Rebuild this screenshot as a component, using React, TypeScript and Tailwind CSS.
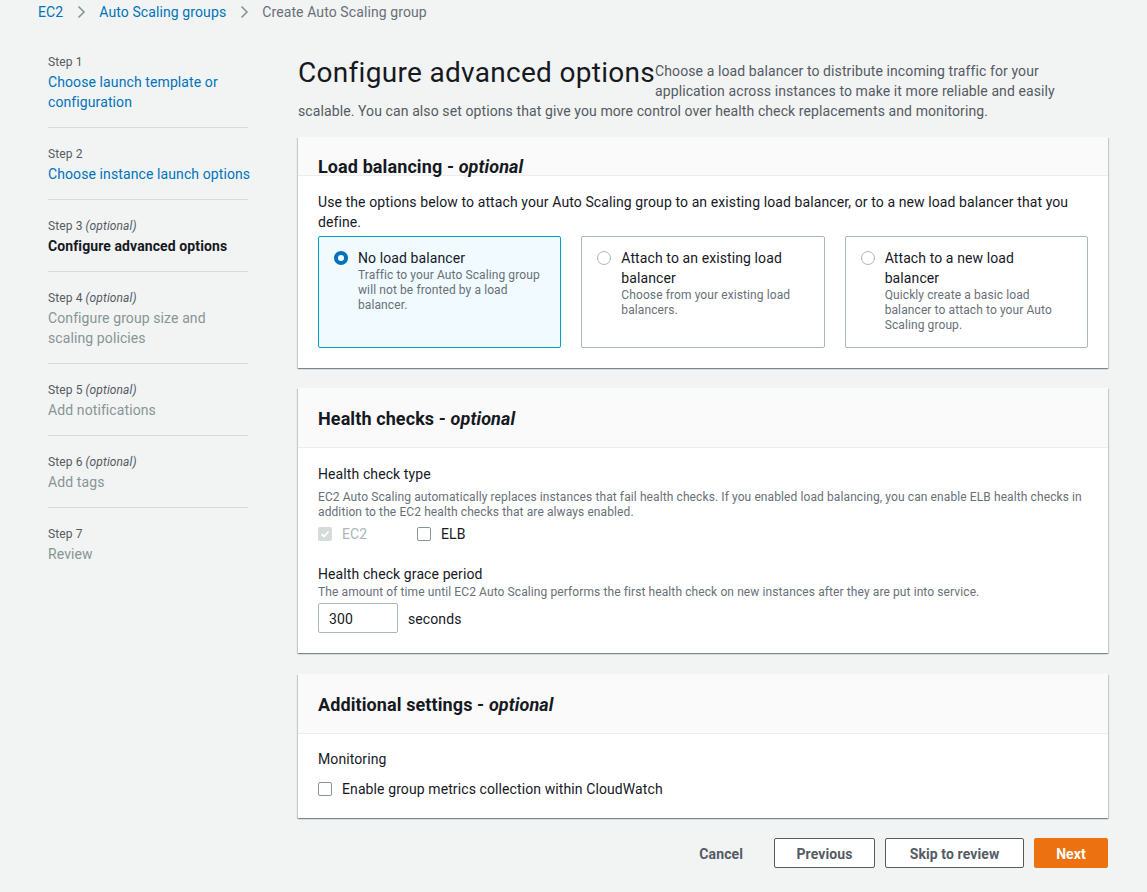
const steps = [
  { n: "Step 1", opt: false, title: "Choose launch template or configuration", state: "link" },
  { n: "Step 2", opt: false, title: "Choose instance launch options", state: "link" },
  { n: "Step 3", opt: true, title: "Configure advanced options", state: "active" },
  { n: "Step 4", opt: true, title: "Configure group size and scaling policies", state: "off" },
  { n: "Step 5", opt: true, title: "Add notifications", state: "off" },
  { n: "Step 6", opt: true, title: "Add tags", state: "off" },
  { n: "Step 7", opt: false, title: "Review", state: "off" },
];

function Chevron() {
  return (
    <svg width="16" height="16" viewBox="0 0 16 16" className="mx-[10px]">
      <path d="M5.5 2.5 L11 8 L5.5 13.5" fill="none" stroke="#879596" strokeWidth="1.6" />
    </svg>
  );
}

function Radio({ checked }: { checked?: boolean }) {
  if (checked) {
    return (
      <span className="mt-[3px] flex h-[14px] w-[14px] shrink-0 items-center justify-center rounded-full bg-[#0073bb]">
        <span className="h-[6px] w-[6px] rounded-full bg-white" />
      </span>
    );
  }
  return <span className="mt-[3px] h-[14px] w-[14px] shrink-0 rounded-full border border-[#aab7b8] bg-white" />;
}

function Tile({ title, desc, checked }: { title: string; desc: string; checked?: boolean }) {
  return (
    <div
      className={`flex gap-[10px] rounded-[2px] border pt-[11px] pr-[15px] pb-[14px] pl-[15px] ${
        checked ? "border-[#00a1c9] bg-[#f1faff]" : "border-[#aab7b8] bg-white"
      }`}
    >
      <Radio checked={checked} />
      <div>
        <div className="text-[14px] leading-[20px] text-[#16191f]">{title}</div>
        <div className="text-[12px] leading-[15px] text-[#687078]">{desc}</div>
      </div>
    </div>
  );
}

function Card({ title, compact, children }: { title: string; compact?: boolean; children: React.ReactNode }) {
  return (
    <div className="bg-white shadow-[0_1px_1px_0_rgba(0,28,36,0.3),1px_1px_1px_0_rgba(0,28,36,0.15),-1px_1px_1px_0_rgba(0,28,36,0.15)]">
      {compact ? (
        <div className="h-[39px] border-b border-[#eaeded] bg-[#fafafa] px-[20px] pt-[19px]">
          <h2 className="text-[18px] font-bold leading-[22px] text-[#16191f]">
            {title} - <i>optional</i>
          </h2>
        </div>
      ) : (
        <div className="border-b border-[#eaeded] bg-[#fafafa] px-[20px] pt-[19px] pb-[16px]">
          <h2 className="text-[18px] font-bold leading-[24px] text-[#16191f]">
            {title} - <i>optional</i>
          </h2>
        </div>
      )}
      {children}
    </div>
  );
}

export default function App() {
  return (
    <div
      className="min-h-[892px] bg-[#f2f3f3] tracking-[0.1px] text-[#16191f]"
      style={{ fontFamily: 'Roboto, "Noto Sans", Arial, sans-serif' }}
    >
      <div className="flex h-[24px] items-center pl-[38px] text-[14px]">
        <span className="text-[#0073bb]">EC2</span>
        <Chevron />
        <span className="text-[#0073bb]">Auto Scaling groups</span>
        <Chevron />
        <span className="text-[#687078]">Create Auto Scaling group</span>
      </div>

      <div className="flex pt-[29px] pl-[48px]">
        <nav className="w-[200px] shrink-0">
          {steps.map((s, i) => (
            <div
              key={s.n}
              className={`${i < steps.length - 1 ? "border-b border-[#d5dbdb]" : ""} ${
                i === 0 ? "pt-0" : "pt-[17px]"
              } pb-[15px]`}
            >
              <div className="text-[12px] leading-[18px] text-[#545b64]">
                {s.n}
                {s.opt && <i> (optional)</i>}
              </div>
              <div
                className={`mt-[1px] text-[14px] leading-[20px] ${i === 1 ? "mr-[-8px]" : ""} ${
                  s.state === "link"
                    ? "text-[#0073bb]"
                    : s.state === "active"
                    ? "font-bold text-[#16191f]"
                    : "text-[#879596]"
                }`}
              >
                {s.title}
              </div>
            </div>
          ))}
        </nav>

        <main className="ml-[50px] w-[810px]">
          <div className="flow-root pt-[8px] text-[14px] leading-[20px] text-[#545b64]">
            <h1 className="float-left mt-[-8px] h-[40px] pt-[2px] text-[28px] leading-[36px] tracking-[0.3px] text-[#16191f]">
              Configure advanced options
            </h1>
            Choose a load balancer to distribute incoming traffic for your application across instances to make it
            more reliable and easily scalable. You can also set options that give you more control over health check
            replacements and monitoring.
          </div>

          <div className="mt-[16px] flex flex-col gap-[20px]">
            <Card title="Load balancing" compact>
              <div className="px-[20px] pt-[16px] pb-[20px]">
                <p className="text-[14px] leading-[20px] text-[#16191f]">
                  Use the options below to attach your Auto Scaling group to an existing load balancer, or to a new load
                  balancer that you define.
                </p>
                <div className="mt-[4px] grid grid-cols-3 gap-[20px]">
                  <Tile
                    checked
                    title="No load balancer"
                    desc="Traffic to your Auto Scaling group will not be fronted by a load balancer."
                  />
                  <Tile title="Attach to an existing load balancer" desc="Choose from your existing load balancers." />
                  <Tile
                    title="Attach to a new load balancer"
                    desc="Quickly create a basic load balancer to attach to your Auto Scaling group."
                  />
                </div>
              </div>
            </Card>

            <Card title="Health checks">
              <div className="px-[20px] pt-[16px] pb-[20px]">
                <div className="text-[14px] leading-[20px]">Health check type</div>
                <div className="mt-[6px] text-[12px] leading-[15px] text-[#687078]">
                  EC2 Auto Scaling automatically replaces instances that fail health checks. If you enabled load
                  balancing, you can enable ELB health checks in addition to the EC2 health checks that are always
                  enabled.
                </div>
                <div className="mt-[4px] flex items-center text-[14px] leading-[20px]">
                  <div className="flex w-[99px] items-center">
                    <span className="flex h-[14px] w-[14px] items-center justify-center rounded-[2px] bg-[#d5dbdb]">
                      <svg width="10" height="10" viewBox="0 0 10 10">
                        <path d="M1.5 5 L4 7.5 L8.5 2.5" fill="none" stroke="white" strokeWidth="1.8" />
                      </svg>
                    </span>
                    <span className="ml-[10px] text-[#aab7b8]">EC2</span>
                  </div>
                  <span className="h-[14px] w-[14px] rounded-[2px] border border-[#879596] bg-white" />
                  <span className="ml-[10px]">ELB</span>
                </div>
                <div className="mt-[20px] text-[14px] leading-[20px]">Health check grace period</div>
                <div className="mt-[1px] text-[12px] leading-[15px] text-[#687078]">
                  The amount of time until EC2 Auto Scaling performs the first health check on new instances after they
                  are put into service.
                </div>
                <div className="mt-[3px] flex items-center text-[14px]">
                  <div className="flex h-[30px] w-[80px] items-center rounded-[2px] border border-[#aab7b8] px-[10px] pt-[2px]">
                    300
                  </div>
                  <span className="ml-[10px] pt-[2px]">seconds</span>
                </div>
              </div>
            </Card>

            <div className="mt-[1px]">
              <Card title="Additional settings">
                <div className="px-[20px] pt-[15px] pb-[19px]">
                  <div className="text-[14px] leading-[20px]">Monitoring</div>
                  <label className="mt-[10px] flex items-center text-[14px] leading-[20px]">
                    <span className="h-[14px] w-[14px] rounded-[2px] border border-[#879596] bg-white" />
                    <span className="ml-[10px]">Enable group metrics collection within CloudWatch</span>
                  </label>
                </div>
              </Card>
            </div>
          </div>

          <div className="mt-[20px] flex items-center justify-end gap-[10px] text-[14px] font-bold">
            <button className="mr-[21px] pt-[2px] text-[#545b64]">Cancel</button>
            <button className="h-[30px] w-[101px] rounded-[2px] border border-[#545b64] bg-white pt-[2px] text-[#545b64]">
              Previous
            </button>
            <button className="h-[30px] w-[139px] rounded-[2px] border border-[#545b64] bg-white pt-[2px] text-[#545b64]">
              Skip to review
            </button>
            <button className="h-[30px] w-[74px] rounded-[2px] bg-[#ec7211] pt-[2px] text-white">Next</button>
          </div>
        </main>
      </div>
    </div>
  );
}
